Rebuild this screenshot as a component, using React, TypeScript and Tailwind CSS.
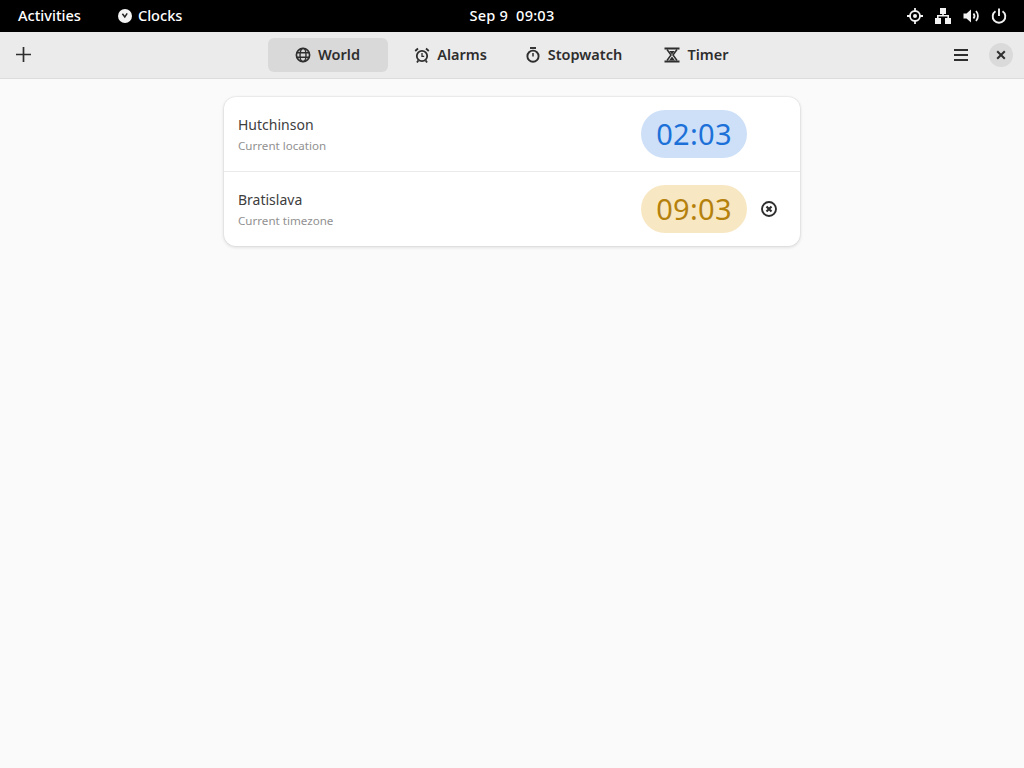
const font = "[font-family:'Noto_Sans','Open_Sans',sans-serif]"

function GlobeIcon() {
  return (
    <svg width="16" height="16" viewBox="0 0 16 16" fill="none" stroke="#2e2e2e" strokeWidth="1.7">
      <circle cx="8" cy="8" r="6.6" />
      <ellipse cx="8" cy="8" rx="3" ry="6.6" strokeWidth="1.4" />
      <path d="M1.5 5.7h13M1.5 10.3h13" strokeWidth="1.4" />
    </svg>
  )
}

function AlarmIcon() {
  return (
    <svg width="16" height="16" viewBox="0 0 16 16" fill="none" stroke="#2e2e2e" strokeWidth="1.8">
      <circle cx="8" cy="9" r="5.2" />
      <path d="M8 6v3.3h2.2" strokeWidth="1.3" />
      <path d="M1.2 4 4 1.5M14.8 4 12 1.5M4.3 13.5 3 15.4M11.7 13.5l1.3 1.9" />
    </svg>
  )
}

function StopwatchIcon() {
  return (
    <svg width="16" height="16" viewBox="0 0 16 16" fill="none" stroke="#2e2e2e" strokeWidth="1.9">
      <path d="M5 1h6" />
      <circle cx="8" cy="9.2" r="5.6" />
      <path d="M8 6v3.4" strokeWidth="1.5" />
    </svg>
  )
}

function TimerIcon() {
  return (
    <svg width="16" height="16" viewBox="0 0 16 16" fill="none" stroke="#2e2e2e">
      <path d="M0.5 1.5h15M0.5 14.5h15" strokeWidth="2" />
      <path d="M3 2.5 7 8l-4 5.5M13 2.5 9 8l4 5.5" strokeWidth="1.5" />
      <path d="M5.2 4h5.6L8 7.6zM8 9.5l3 4H5z" fill="#2e2e2e" stroke="none" />
    </svg>
  )
}

function Tab({ icon, label, active }: { icon: React.ReactNode; label: string; active?: boolean }) {
  return (
    <div
      className={`flex h-[34px] w-[120px] items-center justify-center gap-[7px] rounded-md text-[14.5px] font-semibold text-[#2e2e2e] ${
        active ? "bg-[#d9d9d9]" : ""
      }`}
    >
      {icon}
      <span>{label}</span>
    </div>
  )
}

function CityRow({
  name,
  note,
  time,
  pill,
  removable,
}: {
  name: string
  note: string
  time: string
  pill: string
  removable?: boolean
}) {
  return (
    <div className="flex h-[74px] items-center pl-[14px] pr-[22px]">
      <div className="flex-1 pt-px">
        <div className="text-[14px] leading-[20px] text-[#3d3d3d]">{name}</div>
        <div className="mt-[2px] text-[11.6px] leading-[17px] text-[#919191]">{note}</div>
      </div>
      <div className={`flex h-12 w-[106px] items-center justify-center rounded-full text-[29px] tracking-[0.3px] ${pill}`}>
        {time}
      </div>
      <div className="ml-[13px] flex w-[18px] items-center justify-center">
        {removable && (
          <svg width="16" height="16" viewBox="0 0 16 16" fill="none" stroke="#2e2e2e">
            <circle cx="8" cy="8" r="7" strokeWidth="1.9" />
            <path d="M5.5 5.5l5 5M10.5 5.5l-5 5" strokeWidth="2.2" />
          </svg>
        )}
      </div>
    </div>
  )
}

export default function App() {
  return (
    <div className={`flex h-[768px] w-[1024px] flex-col overflow-hidden bg-[#fafafa] ${font}`}>
      <div className="grid h-8 grid-cols-[1fr_auto_1fr] items-center bg-black text-[14.6px] font-medium text-white">
        <div className="flex items-center pl-[18px]">
          <span>Activities</span>
          <svg className="ml-[37px]" width="14" height="14" viewBox="0 0 14 14">
            <circle cx="7" cy="7" r="7" fill="#f4f4f4" />
            <path d="M4.4 4.8 6.8 8l2.4-3.6" fill="none" stroke="#222" strokeWidth="1.5" />
          </svg>
          <span className="ml-[6px]">Clocks</span>
        </div>
        <div className="tracking-[0.2px]">Sep 9&nbsp;&nbsp;09:03</div>
        <div className="flex items-center justify-end gap-3 pr-[17px]">
          <svg width="16" height="16" viewBox="0 0 16 16" fill="none" stroke="#f2f2f2" strokeWidth="1.8">
            <circle cx="8" cy="8" r="5" />
            <circle cx="8" cy="8" r="2" fill="#f2f2f2" stroke="none" />
            <path d="M8 0v3M8 13v3M0 8h3M13 8h3" />
          </svg>
          <svg width="16" height="16" viewBox="0 0 16 16" fill="#f2f2f2">
            <path d="M5 0h6v6H5zM0 10h6v6H0zM10 10h6v6h-6z" />
            <path d="M7.2 5h1.6v2h5.2v4h-1.6V8.6H3.6V11H2V7h5.2z" />
          </svg>
          <svg width="16" height="16" viewBox="0 0 16 16" fill="none" stroke="#f2f2f2" strokeWidth="1.8">
            <path d="M0.5 5.5h3L8 1.5v13l-4.5-4h-3z" fill="#f2f2f2" stroke="none" />
            <path d="M10.5 5.5a4 4 0 0 1 0 5M13 3a7.5 7.5 0 0 1 0 10" />
          </svg>
          <svg width="16" height="16" viewBox="0 0 16 16" fill="none" stroke="#f2f2f2" strokeWidth="1.9">
            <path d="M8 0.5v7.5" />
            <path d="M4.5 3.2a6.3 6.3 0 1 0 7 0" />
          </svg>
        </div>
      </div>

      <div className="grid h-[47px] grid-cols-[1fr_auto_1fr] items-center border-b border-[#dcdcdc] bg-[#ebebeb] pb-px">
        <div className="pl-4">
          <svg width="15" height="15" viewBox="0 0 15 15" stroke="#2e2e2e" strokeWidth="1.7">
            <path d="M7.5 0v15M0 7.5h15" />
          </svg>
        </div>
        <div className="flex gap-[3px]">
          <Tab icon={<GlobeIcon />} label="World" active />
          <Tab icon={<AlarmIcon />} label="Alarms" />
          <Tab icon={<StopwatchIcon />} label="Stopwatch" />
          <Tab icon={<TimerIcon />} label="Timer" />
        </div>
        <div className="flex items-center justify-end pr-[11px]">
          <svg width="16" height="16" viewBox="0 0 16 16" stroke="#2e2e2e" strokeWidth="1.8">
            <path d="M1 3h14M1 8h14M1 13h14" />
          </svg>
          <div className="ml-[20px] flex h-6 w-6 items-center justify-center rounded-full bg-[#dadada]">
            <svg width="10" height="10" viewBox="0 0 10 10" stroke="#2e2e2e" strokeWidth="2">
              <path d="M1.2 1.2l7.6 7.6M8.8 1.2L1.2 8.8" />
            </svg>
          </div>
        </div>
      </div>

      <div className="mx-auto mt-[18px] flex w-[576px] flex-col divide-y divide-[#ebebeb] rounded-xl bg-white shadow-[0_0_0_1px_rgba(0,0,0,0.03),0_1px_3px_1px_rgba(0,0,0,0.09)]">
        <div>
          <CityRow name="Hutchinson" note="Current location" time="02:03" pill="bg-[#cde0f8] text-[#1c71d8]" />
        </div>
        <div>
          <CityRow
            name="Bratislava"
            note="Current timezone"
            time="09:03"
            pill="bg-[#f8e7c3] text-[#b5810d]"
            removable
          />
        </div>
      </div>
    </div>
  )
}
